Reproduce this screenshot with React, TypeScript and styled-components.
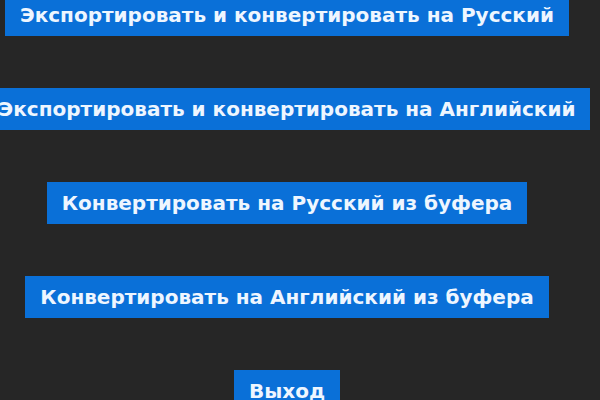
import * as React from "react";
import styled, { createGlobalStyle } from "styled-components";

const GlobalStyle = createGlobalStyle`
  html, body {
    margin: 0;
    padding: 0;
    background: #262626;
    overflow: hidden;
  }
`;

const Menu = styled.div`
  width: 574px;
  display: flex;
  flex-direction: column;
  align-items: center;
  gap: 52px;
  margin-top: -6px;
`;

const MenuButton = styled.button`
  flex: none;
  height: 42px;
  padding: 0 15px;
  border: none;
  background: #0a70d8;
  color: #eef6ff;
  font-family: "DejaVu Sans", Verdana, sans-serif;
  font-weight: bold;
  font-size: 20px;
  white-space: nowrap;
  cursor: pointer;
`;

const items = [
  "Экспортировать и конвертировать на Русский",
  "Экспортировать и конвертировать на Английский",
  "Конвертировать на Русский из буфера",
  "Конвертировать на Английский из буфера",
  "Выход",
];

export default function App() {
  return (
    <>
      <GlobalStyle />
      <Menu>
        {items.map((label) => (
          <MenuButton key={label}>{label}</MenuButton>
        ))}
      </Menu>
    </>
  );
}
